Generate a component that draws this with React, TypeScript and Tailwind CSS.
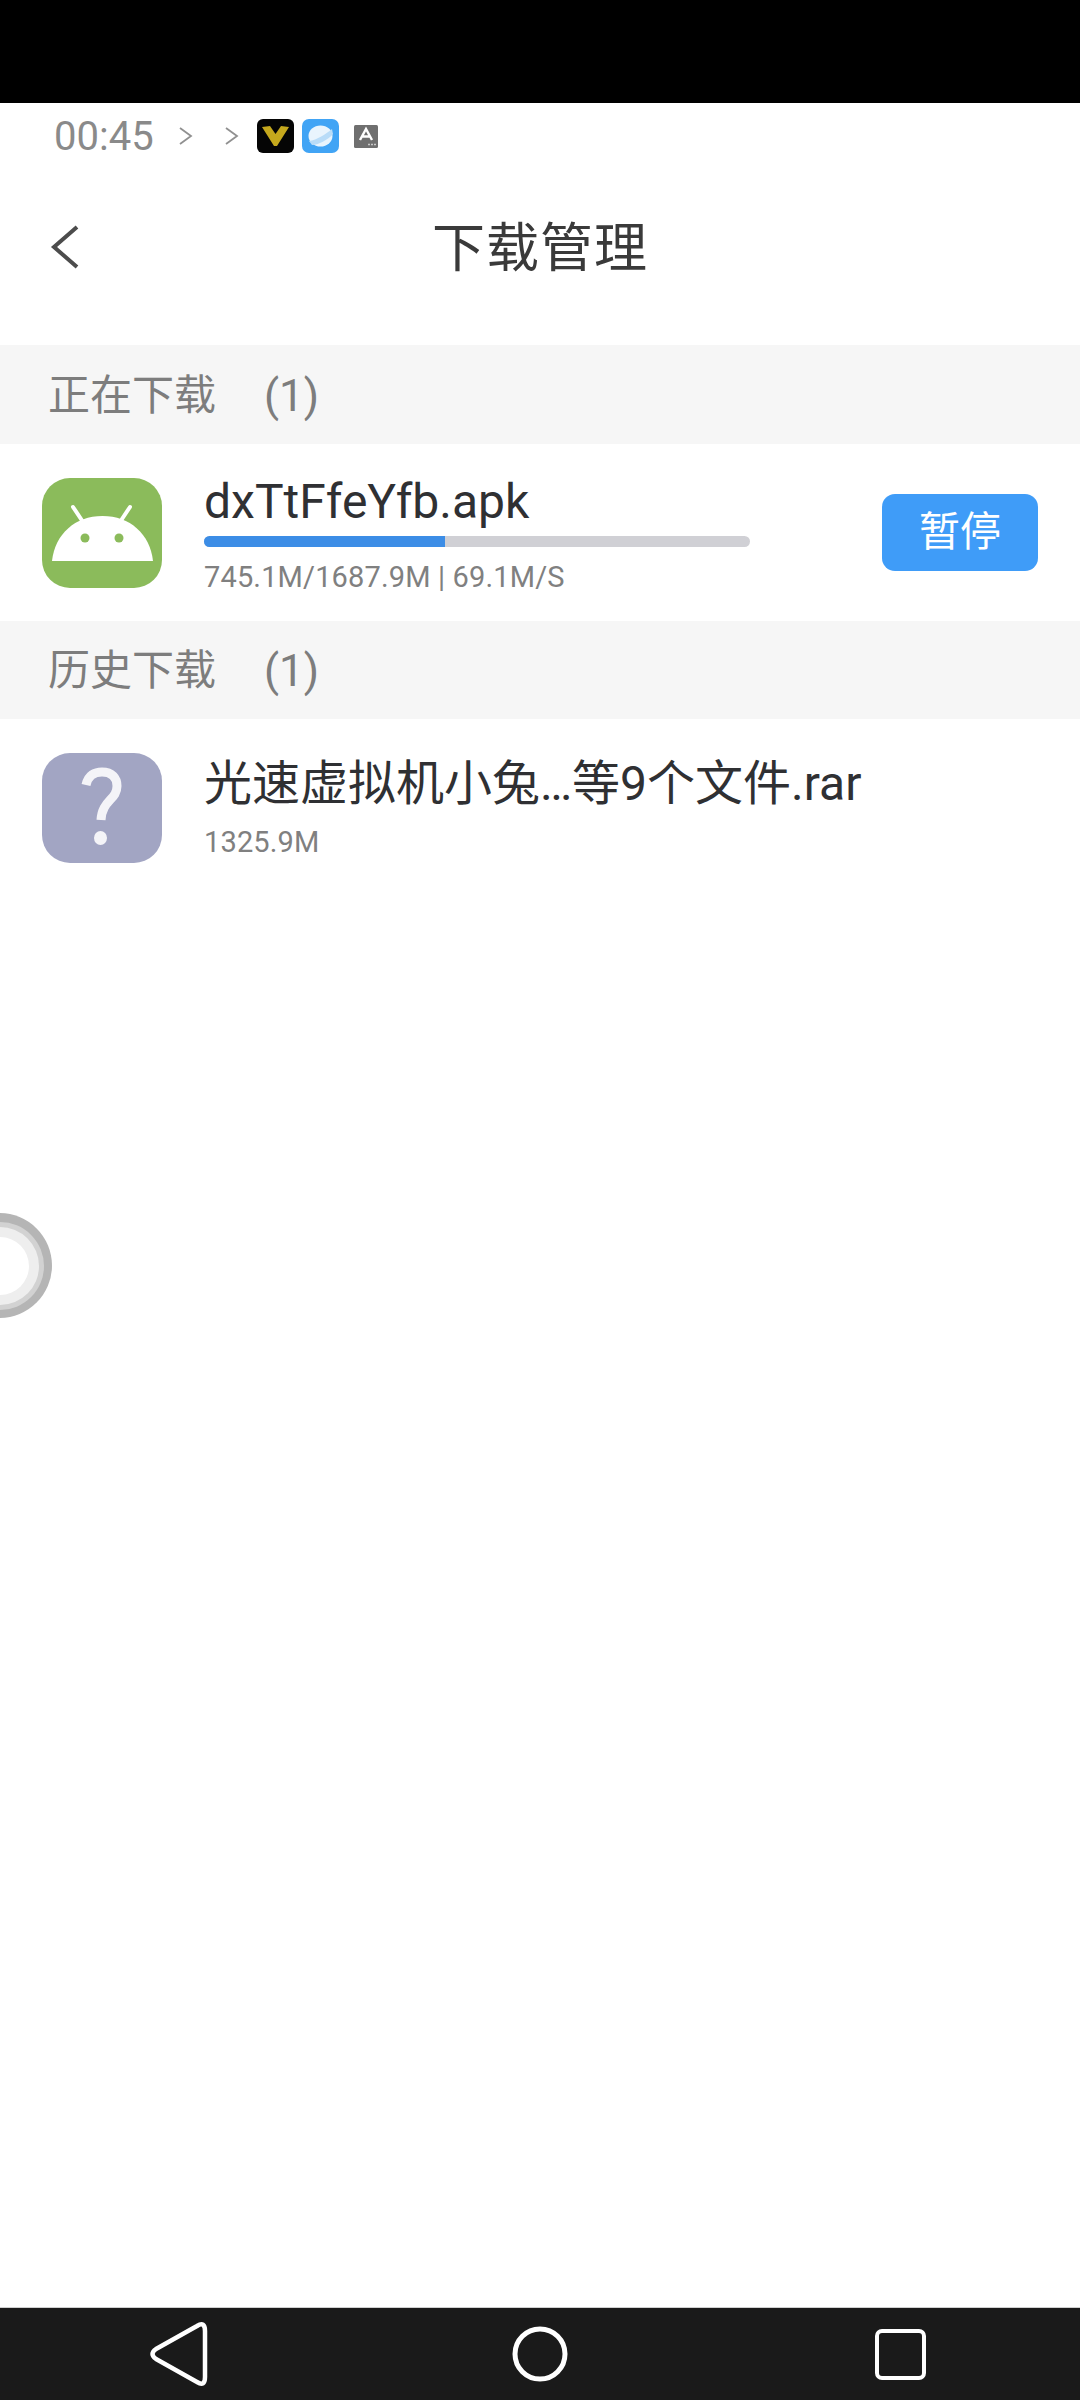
import React from "react";

const font = "font-['Roboto','Noto_Sans_CJK_SC',sans-serif]";

function SectionHeader({ label, height }: { label: string; height: string }) {
  return (
    <div className={`flex items-center bg-[#f6f6f6] pl-[48px] pt-[2px] text-[42px] text-[#7d7d7d] ${height}`}>
      <span className="w-[216px] leading-none">{label}</span>
      <span className="text-[44px] leading-none">(1)</span>
    </div>
  );
}

function AndroidIcon() {
  return (
    <div className="flex h-[110px] w-[120px] shrink-0 items-center justify-center rounded-[28px] bg-[#8bbb5b]">
      <svg width="120" height="110" viewBox="0 0 120 110">
        <path d="M10 83 C13 56 33 38 60.5 38 C88 38 108 56 111 83 Z" fill="#fff" />
        <path d="M41 44 L31 29 M78 44 L88 29" stroke="#fff" strokeWidth="4" strokeLinecap="round" />
        <circle cx="43" cy="60" r="4.5" fill="#8bbb5b" />
        <circle cx="77" cy="60" r="4.5" fill="#8bbb5b" />
      </svg>
    </div>
  );
}

function UnknownIcon() {
  return (
    <div className="flex h-[110px] w-[120px] shrink-0 items-center justify-center rounded-[28px] bg-[#a2a5c3]">
      <svg width="120" height="110" viewBox="0 0 120 110">
        <path
          d="M44 32 C46 22 53 19 60 19 C70 19 75 25 75 33 C75 47 60 47 59 67"
          fill="none"
          stroke="#f4f4f8"
          strokeWidth="9"
        />
        <ellipse cx="58.5" cy="85" rx="6.5" ry="7" fill="#f4f4f8" />
      </svg>
    </div>
  );
}

export default function App() {
  return (
    <div className={`relative flex h-[2400px] w-[1080px] flex-col overflow-hidden bg-white ${font}`}>
      <div className="h-[103px] bg-black" />

      {/* status bar */}
      <div className="flex h-[66px] items-center pl-[54px]">
        <span className="w-[124px] pt-[2px] text-[40px] leading-none text-[#8a8a8a]">00:45</span>
        <svg width="15" height="20" viewBox="0 0 15 20" className="mr-[31px]">
          <path d="M2 2 L13 10 L2 18" fill="none" stroke="#909090" strokeWidth="1.8" />
        </svg>
        <svg width="15" height="20" viewBox="0 0 15 20" className="mr-[18px]">
          <path d="M2 2 L13 10 L2 18" fill="none" stroke="#909090" strokeWidth="1.8" />
        </svg>
        <svg width="37" height="34" viewBox="0 0 37 34" className="mr-[8px]">
          <rect width="37" height="34" rx="6" fill="#050505" />
          <path d="M5 8 L13 7 L18.5 15 L24 7 L32 8 L20 27 L17 27 Z" fill="#c5a81d" />
        </svg>
        <svg width="37" height="34" viewBox="0 0 37 34" className="mr-[15px]">
          <rect width="37" height="34" rx="7" fill="#41a4f5" />
          <ellipse cx="18.5" cy="17" rx="12" ry="10.5" fill="#e9f4fd" />
          <path d="M7 22 C15 21 24 15 30 10 L31 15 C26 21 16 26 10 26 Z" fill="#b9dcf8" />
        </svg>
        <svg width="24" height="23" viewBox="0 0 24 23">
          <rect width="24" height="23" rx="1.5" fill="#6f6f6f" />
          <path d="M6 15 L12 4 L18 15 M8.5 11.5 H15.5" fill="none" stroke="#fff" strokeWidth="2.4" />
          <path d="M14 19.5 H22" stroke="#c9c9c9" strokeWidth="1.5" strokeDasharray="2 1" />
        </svg>
      </div>

      {/* header */}
      <div className="relative flex h-[176px] items-center justify-center pb-[16px]">
        <svg
          width="30"
          height="44"
          viewBox="0 0 30 44"
          className="absolute left-[50px] top-[56px]"
        >
          <path d="M27 2 L4 22 L27 42" fill="none" stroke="#4c4c4c" strokeWidth="4" />
        </svg>
        <span className="text-[53px] leading-none tracking-[1px] text-[#3a3a3a]">下载管理</span>
      </div>

      <SectionHeader label="正在下载" height="h-[99px]" />

      {/* active download */}
      <div className="flex h-[177px] items-center pl-[42px] pr-[42px]">
        <AndroidIcon />
        <div className="ml-[42px] flex w-[546px] flex-col pt-[6px]">
          <span className="text-[48px] leading-[50px] text-[#2f3033]">dxTtFfeYfb.apk</span>
          <div className="mt-[9px] h-[11px] w-full overflow-hidden rounded-full bg-[#d0d0d5]">
            <div className="h-full w-[241px] bg-[#3c8de6]" />
          </div>
          <span className="mt-[12px] text-[29px] leading-[36px] tracking-[0.15px] text-[#808080]">
            745.1M/1687.9M | 69.1M/S
          </span>
        </div>
        <div className="ml-auto flex h-[77px] w-[156px] items-center justify-center rounded-[13px] bg-[#3f9cf8] text-[41px] leading-none text-white">
          暂停
        </div>
      </div>

      <SectionHeader label="历史下载" height="h-[98px]" />

      {/* history */}
      <div className="flex h-[178px] items-center pl-[42px]">
        <UnknownIcon />
        <div className="ml-[42px] flex flex-col">
          <span className="text-[48px] leading-[54px] text-[#2f3033]">光速虚拟机小兔…等9个文件.rar</span>
          <span className="mt-[14px] text-[29px] leading-[34px] tracking-[0.15px] text-[#808080]">1325.9M</span>
        </div>
      </div>

      <div className="flex-1" />

      {/* nav bar */}
      <div className="flex h-[93px] items-center border-t border-[#cfcfcf] bg-[#1a1a1a]">
        <svg width="1080" height="92" viewBox="0 2308 1080 92">
          <path
            d="M156 2349 L197 2326 Q205 2321 205 2331 V2377 Q205 2387 197 2382 L156 2359 Q149 2354 156 2349 Z"
            fill="none"
            stroke="#fff"
            strokeWidth="4.5"
            strokeLinejoin="round"
          />
          <circle cx="540" cy="2354" r="25" fill="none" stroke="#fff" strokeWidth="5" />
          <rect x="877" y="2331" width="47" height="47" rx="5" fill="none" stroke="#fff" strokeWidth="4" />
        </svg>
      </div>

      {/* floating ball */}
      <div className="absolute left-[-53px] top-[1213px] flex h-[105px] w-[105px] items-center justify-center rounded-full bg-[#b5b5b5]">
        <div className="flex h-[88px] w-[88px] items-center justify-center rounded-full bg-[#d2d2d2]">
          <div className="flex h-[78px] w-[78px] items-center justify-center rounded-full bg-[#eeeeee]">
            <div className="h-[58px] w-[58px] rounded-full bg-white" />
          </div>
        </div>
      </div>
    </div>
  );
}
